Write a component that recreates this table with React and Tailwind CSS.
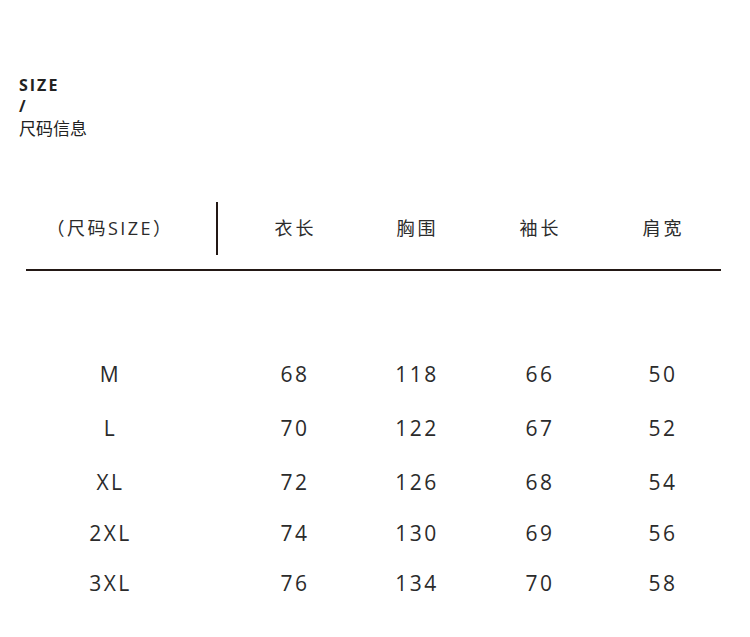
import React from "react";

const rows = [
  { s: "M", v: ["68", "118", "66", "50"], h: "h-[54px]" },
  { s: "L", v: ["70", "122", "67", "52"], h: "h-[54px]" },
  { s: "XL", v: ["72", "126", "68", "54"], h: "h-[53px]" },
  { s: "2XL", v: ["74", "130", "69", "56"], h: "h-[50px]" },
  { s: "3XL", v: ["76", "134", "70", "58"], h: "h-[50px]" },
];

const cols = "grid grid-cols-[166px_41px_122px_122px_124px_122px]";

export default function App() {
  return (
    <div
      className="w-[750px] h-[637px] bg-white text-[#2b2b2b] overflow-hidden"
      style={{ fontFamily: '"Open Sans", "Noto Sans CJK SC", sans-serif' }}
    >
      <div className="pt-[75px] pl-[19px] leading-[21px] text-[#222]">
        <div className="text-[16px] font-bold tracking-[2px]">SIZE</div>
        <div className="text-[16px] font-bold">/</div>
        <div className="text-[17px]" style={{ fontFamily: '"Noto Sans CJK SC", sans-serif' }}>
          尺码信息
        </div>
      </div>

      <div className="mt-[64px] ml-[26px] w-[695px]">
        <div className={`${cols} h-[53px] items-center text-[18px] tracking-[3px]`}
          style={{ fontFamily: '"Open Sans", "Noto Sans CJK SC", sans-serif' }}>
          <div className="text-center tracking-[2.5px] pl-[2px]">（尺码SIZE）</div>
          <div className="h-full flex justify-start pl-[24px]">
            <div className="w-[2px] h-full bg-[#231815]" />
          </div>
          <div className="text-center pl-[3px]">衣长</div>
          <div className="text-center pl-[3px]">胸围</div>
          <div className="text-center pl-[3px]">袖长</div>
          <div className="text-center pl-[3px]">肩宽</div>
        </div>
        <div className="mt-[14px] h-[2px] bg-[#231815]" />

        <div className="mt-[77px]">
          {rows.map((r) => (
            <div key={r.s} className={`${cols} ${r.h} items-center text-[21px] tracking-[2.5px]`}>
              <div className="text-center pl-[3px]">{r.s}</div>
              <div />
              {r.v.map((x, i) => (
                <div key={i} className="text-center pl-[2px]">{x}</div>
              ))}
            </div>
          ))}
        </div>
      </div>
    </div>
  );
}
